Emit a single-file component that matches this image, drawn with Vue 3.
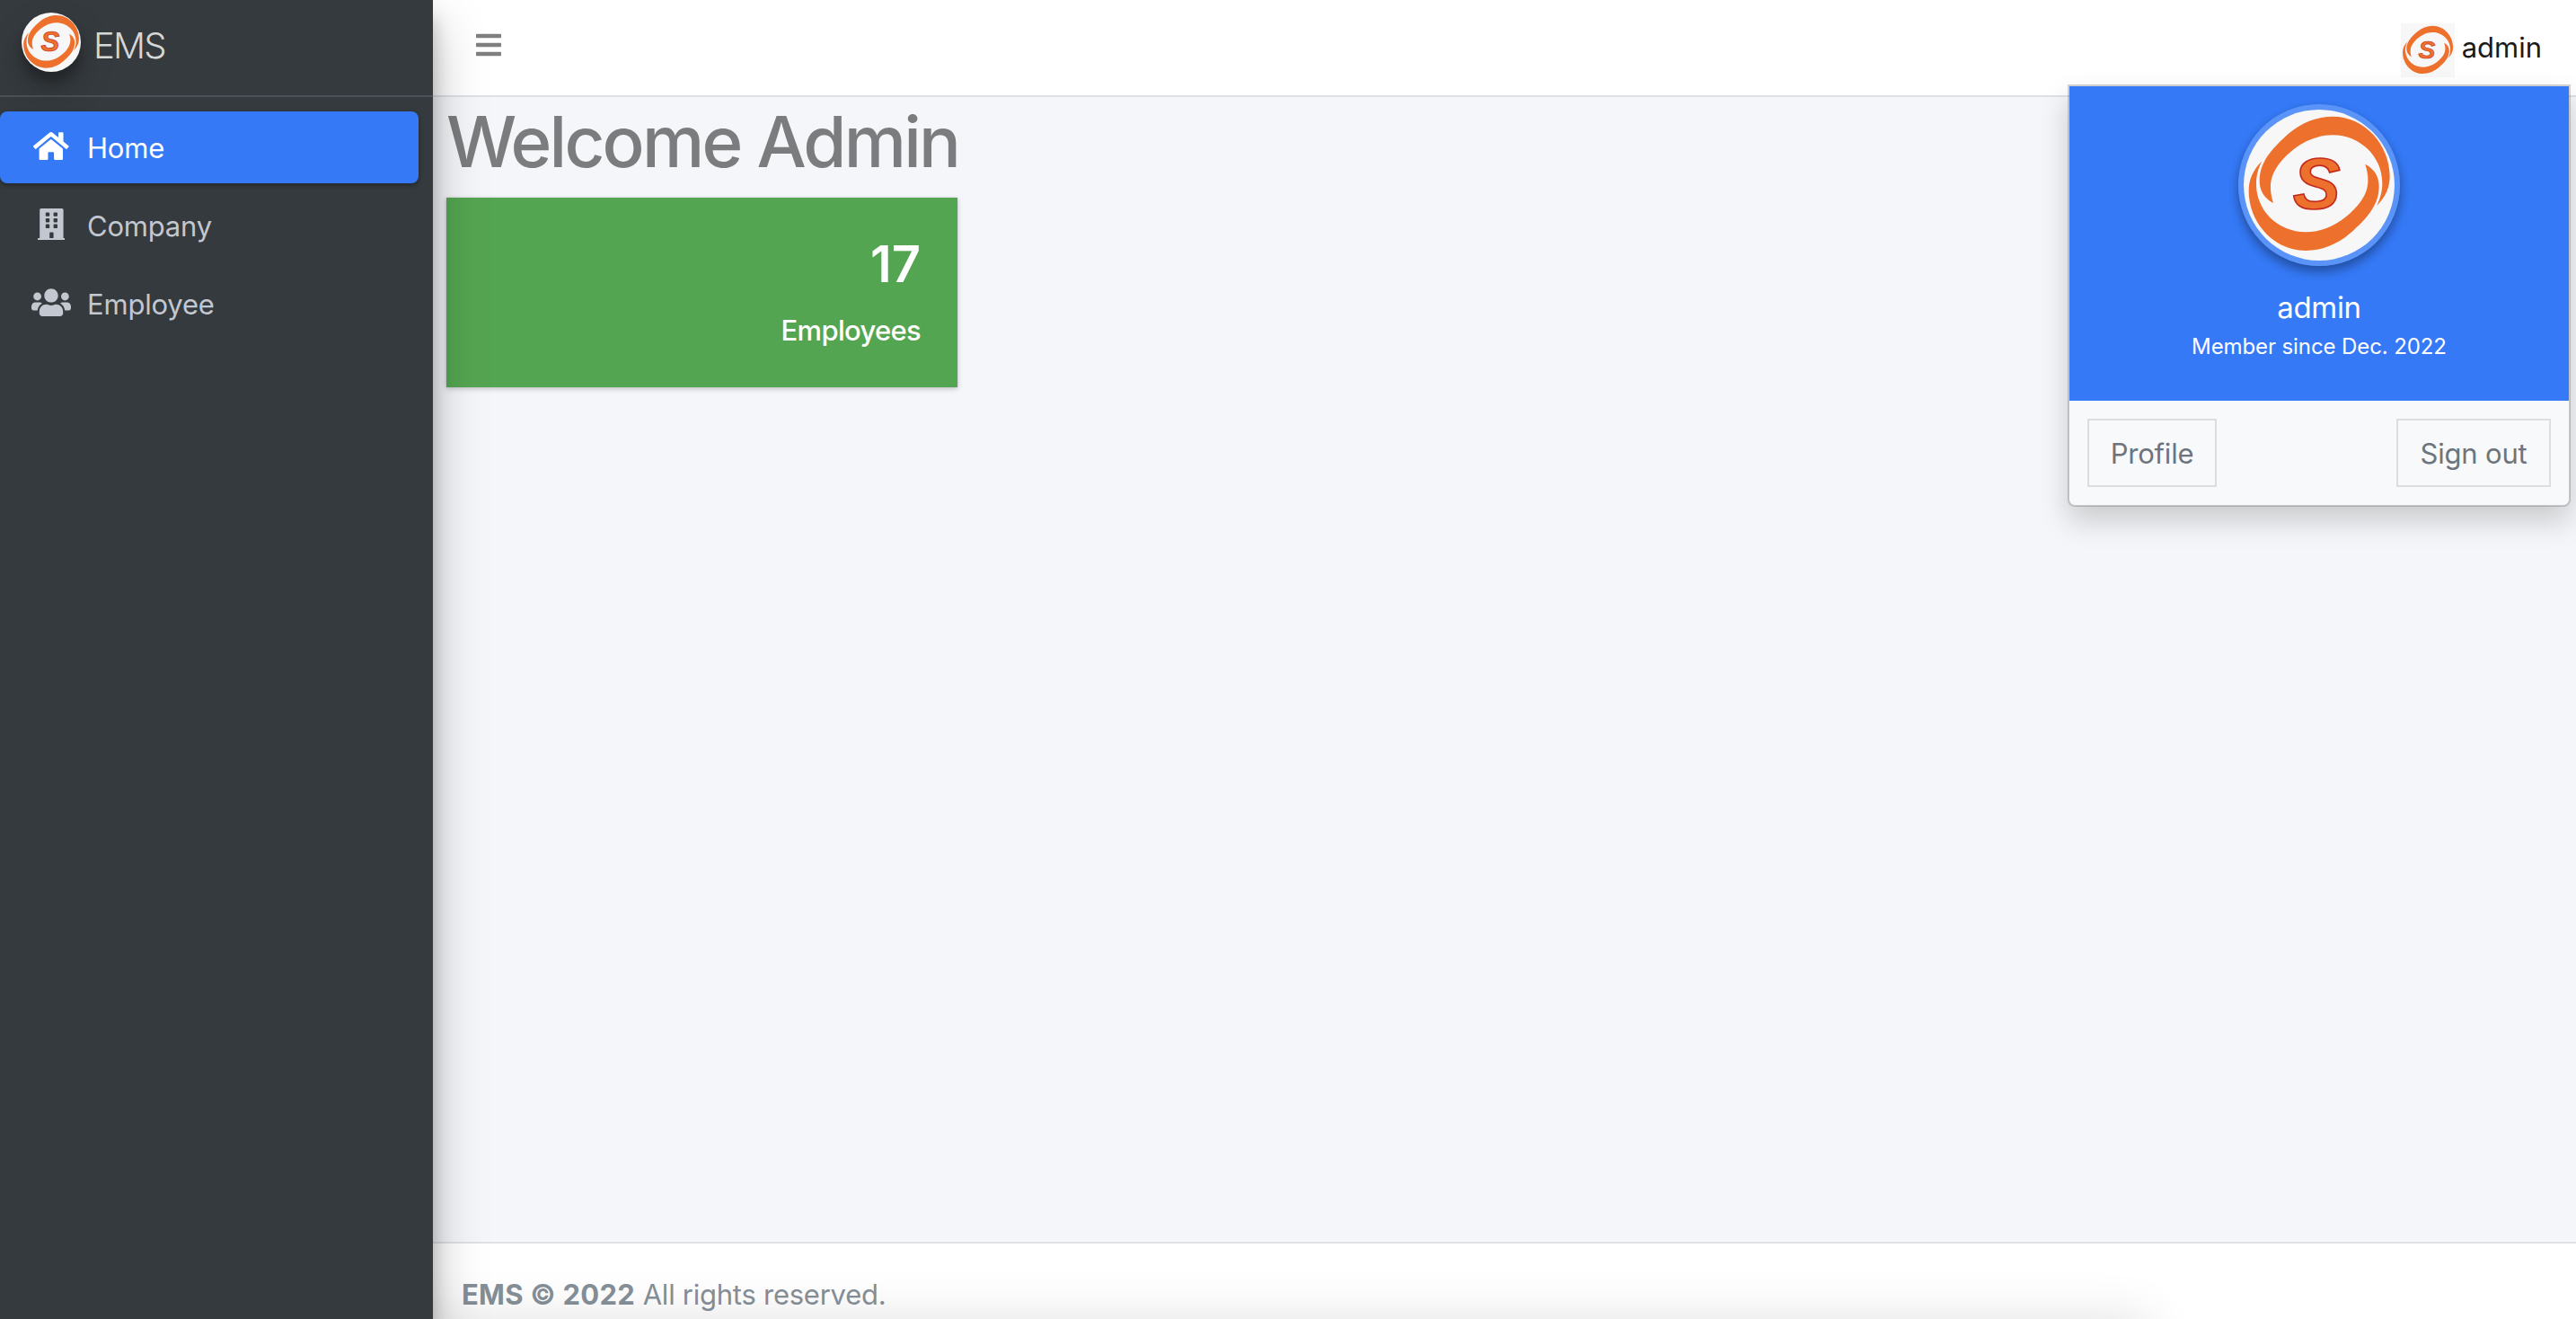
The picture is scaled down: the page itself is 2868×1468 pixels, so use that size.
<script setup>
import { h } from 'vue'

const icons = {
  home: {
    width: 576,
    path: 'M280.37 148.26L96 300.11V464a16 16 0 0 0 16 16l112.06-.29a16 16 0 0 0 15.92-16V368a16 16 0 0 1 16-16h64a16 16 0 0 1 16 16v95.64a16 16 0 0 0 16 16.05L464 480a16 16 0 0 0 16-16V300L295.67 148.26a12.19 12.19 0 0 0-15.3 0zM571.6 251.47L488 182.56V44.05a12 12 0 0 0-12-12h-56a12 12 0 0 0-12 12v72.61L318.47 43a48 48 0 0 0-61 0L4.34 251.47a12 12 0 0 0-1.6 16.9l25.5 31A12 12 0 0 0 45.15 301l235.22-193.74a12.19 12.19 0 0 1 15.3 0L530.9 301a12 12 0 0 0 16.9-1.6l25.5-31a12 12 0 0 0-1.7-16.93z'
  },
  building: {
    width: 448,
    path:
      'M436 480h-20V24c0-13.255-10.745-24-24-24H56C42.745 0 32 10.745 32 24v456H12c-6.627 0-12 5.373-12 12v20h448v-20c0-6.627-5.373-12-12-12z' +
      [64, 160, 256]
        .flatMap((y) => [128, 256].map((x) => `M${x} ${y + 12}v40c0 6.627 5.373 12 12 12h40c6.627 0 12-5.373 12-12v-40c0-6.627-5.373-12-12-12h-40c-6.627 0-12 5.373-12 12z`))
        .join('') +
      'M192 396v84h64v-84c0-6.627-5.373-12-12-12h-40c-6.627 0-12 5.373-12 12z'
  },
  users: {
    width: 640,
    path: 'M96 224c35.3 0 64-28.7 64-64s-28.7-64-64-64-64 28.7-64 64 28.7 64 64 64zm448 0c35.3 0 64-28.7 64-64s-28.7-64-64-64-64 28.7-64 64 28.7 64 64 64zm32 32h-64c-17.6 0-33.5 7.1-45.1 18.6 40.3 22.1 68.9 62 75.1 109.4h66c17.7 0 32-14.3 32-32v-32c0-35.3-28.7-64-64-64zm-256 0c61.9 0 112-50.1 112-112S381.9 32 320 32 208 82.1 208 144s50.1 112 112 112zm76.8 32h-8.3c-20.8 10-43.9 16-68.5 16s-47.6-6-68.5-16h-8.3C179.6 288 128 339.6 128 403.2V432c0 26.5 21.5 48 48 48h288c26.5 0 48-21.5 48-48v-28.8c0-63.6-51.6-115.2-115.2-115.2zm-223.7-13.4C161.5 263.1 145.6 256 128 256H64c-35.3 0-64 28.7-64 64v32c0 17.7 14.3 32 32 32h65.9c6.3-47.4 34.9-87.3 75.2-109.4z'
  }
}

const links = [
  { label: 'Home', icon: 'home', active: true },
  { label: 'Company', icon: 'building' },
  { label: 'Employee', icon: 'users' }
]

const swoosh =
  'M213 408C180 390 167 365 167 333C167 270 210 225 262 178C308 138 360 119 412 119C520 119 602 215 602 318C602 355 590 385 558 418C572 390 577 365 577 342C577 250 500 181 412 181C340 181 280 222 240 268C203 312 195 350 213 408Z'

const BrandMark = () =>
  h('svg', { viewBox: '114 96 504 504' }, [
    h('rect', { x: 114, y: 96, width: 504, height: 504, fill: '#f7f7f7' }),
    h('path', { d: swoosh, fill: '#ed712d' }),
    h('path', { d: swoosh, fill: '#ed712d', transform: 'rotate(180 366.5 343)' }),
    h(
      'text',
      {
        x: 358,
        y: 427,
        'text-anchor': 'middle',
        'font-family': '"Liberation Sans", Arial, sans-serif',
        'font-size': 238,
        'font-weight': 700,
        'font-style': 'italic',
        fill: '#ed712d',
        stroke: '#c42a1c',
        'stroke-width': 5
      },
      'S'
    )
  ])
</script>

<template>
  <div class="wrapper">
    <aside class="sidebar">
      <a class="brand">
        <BrandMark class="brand-logo" />
        <span class="brand-text">EMS</span>
      </a>
      <nav class="menu">
        <a v-for="link in links" :key="link.label" class="link" :class="{ active: link.active }">
          <span class="link-icon">
            <svg :viewBox="`0 0 ${icons[link.icon].width} 512`">
              <path :d="icons[link.icon].path" fill="currentColor" fill-rule="evenodd" />
            </svg>
          </span>
          <span class="link-text">{{ link.label }}</span>
        </a>
      </nav>
    </aside>

    <div class="main">
      <header class="navbar">
        <svg class="bars" viewBox="0 0 448 512">
          <path
            fill="currentColor"
            d="M16 132h416c8.837 0 16-7.163 16-16V76c0-8.837-7.163-16-16-16H16C7.163 60 0 67.163 0 76v40c0 8.837 7.163 16 16 16zm0 160h416c8.837 0 16-7.163 16-16v-40c0-8.837-7.163-16-16-16H16c-8.837 0-16 7.163-16 16v40c0 8.837 7.163 16 16 16zm0 160h416c8.837 0 16-7.163 16-16v-40c0-8.837-7.163-16-16-16H16c-8.837 0-16 7.163-16 16v40c0 8.837 7.163 16 16 16z"
          />
        </svg>
        <div class="user">
          <BrandMark class="user-image" />
          <span class="user-name">admin</span>
        </div>
        <div class="dropdown">
          <div class="user-header">
            <BrandMark class="avatar" />
            <p class="profile-name">admin</p>
            <small class="since">Member since Dec. 2022</small>
          </div>
          <div class="user-footer">
            <button class="btn profile">Profile</button>
            <button class="btn signout">Sign out</button>
          </div>
        </div>
      </header>

      <main class="content">
        <h1>Welcome Admin</h1>
        <section class="card">
          <div class="count">17</div>
          <div class="caption">Employees</div>
        </section>
      </main>

      <footer class="footer"><strong>EMS © 2022</strong> <span>All rights reserved.</span></footer>
      <div class="bottom-shade"></div>
    </div>
  </div>
</template>

<style>
body {
  margin: 0;
  overflow: hidden;
}
</style>

<style scoped>
* {
  box-sizing: border-box;
}
.wrapper {
  position: relative;
  display: flex;
  width: 2868px;
  height: 1468px;
  overflow: hidden;
  background: #f4f6f9;
  font-family: Inter, "Noto Sans", sans-serif;
  font-size: 31px;
  line-height: 48px;
}
.sidebar {
  position: relative;
  z-index: 2;
  flex: none;
  width: 482px;
  background: #353a3e;
  box-shadow: 0 28px 56px rgba(0, 0, 0, 0.25), 0 20px 20px rgba(0, 0, 0, 0.22);
}
.brand {
  display: flex;
  align-items: flex-start;
  height: 108px;
  padding: 14px 0 0 24px;
  border-bottom: 2px solid #4b5158;
}
.brand-logo {
  width: 66px;
  height: 66px;
  border-radius: 50%;
  box-shadow: 0 20px 40px rgba(0, 0, 0, 0.19), 0 12px 12px rgba(0, 0, 0, 0.23);
}
.brand-text {
  margin: 13px 0 0 14px;
  font-size: 40px;
  font-weight: 300;
  letter-spacing: -1.8px;
  color: #d6d7d8;
}
.menu {
  display: flex;
  flex-direction: column;
  gap: 7px;
  padding-top: 16px;
}
.link {
  display: flex;
  align-items: center;
  width: 466px;
  height: 80px;
  padding-left: 31px;
  border-radius: 8px;
  color: #c2c7d0;
}
.link.active {
  color: #fff;
  background: #3579f6;
  box-shadow: 0 2px 6px rgba(0, 0, 0, 0.12), 0 2px 4px rgba(0, 0, 0, 0.24);
}
.link-icon {
  display: flex;
  justify-content: center;
  width: 52px;
  margin-top: -3px;
}
.link-icon svg {
  height: 35.2px;
}
.link-text {
  margin: 1px 0 0 14px;
  letter-spacing: -0.2px;
}
.main {
  position: relative;
  display: flex;
  flex: 1;
  flex-direction: column;
}
.navbar {
  position: relative;
  z-index: 1;
  display: flex;
  justify-content: space-between;
  height: 108px;
  padding: 26px 38px 0 48px;
  background: #fff;
  border-bottom: 2px solid #dee2e6;
}
.bars {
  width: 28px;
  height: 32px;
  margin-top: 8px;
  color: #7f7f7f;
}
.user {
  display: flex;
  color: #1a1a1a;
}
.user-image {
  width: 60px;
  height: 60px;
}
.user-name {
  margin: 3px 0 0 8px;
}
.dropdown {
  position: absolute;
  top: 94px;
  right: 6px;
  width: 560px;
  height: 470px;
  border: 2px solid rgba(0, 0, 0, 0.18);
  border-radius: 0 0 8px 8px;
  background: #f8f9fa;
  background-clip: padding-box;
  box-shadow: 0 16px 32px rgba(0, 0, 0, 0.175);
}
.user-header {
  display: flex;
  flex-direction: column;
  align-items: center;
  height: 350px;
  padding-top: 20px;
  background: #3579f6;
  color: #fff;
}
.avatar {
  width: 180px;
  height: 180px;
  border: 6px solid #5b94f8;
  border-radius: 50%;
  box-shadow: 0 6px 12px rgba(0, 0, 0, 0.16), 0 6px 12px rgba(0, 0, 0, 0.23);
}
.profile-name {
  margin: 22px 0 0;
  font-size: 33px;
  letter-spacing: -0.3px;
}
.since {
  font-size: 24px;
  line-height: 40px;
  letter-spacing: -0.1px;
}
.user-footer {
  display: flex;
  justify-content: space-between;
  padding: 20px;
}
.btn {
  height: 76px;
  padding: 1px 0 0;
  border: 2px solid #ddd;
  background: #f8f9fa;
  color: #6c757d;
  font: inherit;
  letter-spacing: -0.2px;
  text-align: center;
}
.profile {
  width: 144px;
}
.signout {
  width: 172px;
}
.content {
  flex: 1;
  padding: 0 15px;
}
h1 {
  margin: 2px 0 14px;
  font-size: 78px;
  font-weight: 550;
  line-height: 96px;
  letter-spacing: -2.8px;
  color: #7b7c7d;
}
.card {
  width: 569px;
  height: 211px;
  padding: 44px 41px 0;
  background: #54a551;
  color: #fff;
  text-align: right;
  box-shadow: 0 0 2px rgba(0, 0, 0, 0.125), 0 2px 6px rgba(0, 0, 0, 0.2);
}
.count {
  font-size: 56px;
  font-weight: 600;
  line-height: 60px;
}
.caption {
  margin-top: 20px;
  font-weight: 500;
  letter-spacing: -0.7px;
}
.footer {
  height: 86px;
  padding: 33px 0 0 32px;
  border-top: 2px solid #dee2e6;
  background: #fff;
  color: #869099;
}
.footer strong {
  font-weight: 700;
  letter-spacing: 0.25px;
}
.footer span {
  letter-spacing: -0.25px;
}
/* soft shadow cast by a panel resting below the page */
.bottom-shade {
  position: absolute;
  top: 1468px;
  left: -480px;
  width: 2390px;
  height: 100px;
  box-shadow: 0 0 56px rgba(0, 0, 0, 0.12);
}
</style>
